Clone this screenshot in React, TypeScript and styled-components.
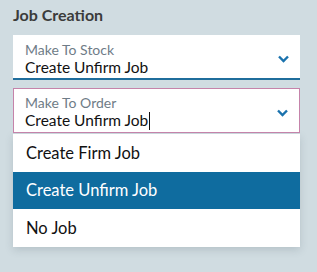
import * as React from "react";
import styled, { createGlobalStyle } from "styled-components";

const GlobalStyle = createGlobalStyle`
  html, body {
    margin: 0;
    padding: 0;
    background: #d0dce1;
    font-family: Lato, "Noto Sans", sans-serif;
  }
`;

const Page = styled.div`
  width: 317px;
  height: 272px;
  padding: 4px 17px 0 13px;
  box-sizing: border-box;
`;

const Title = styled.h2`
  margin: 0 0 9px;
  font-size: 16px;
  line-height: 22px;
  font-weight: 700;
  color: #3b3b3b;
`;

const Stack = styled.div`
  display: flex;
  flex-direction: column;
  gap: 8px;
`;

const Field = styled.div<{ $focused?: boolean }>`
  position: relative;
  height: 45px;
  box-sizing: border-box;
  background: #fff;
  border: ${(p) => (p.$focused ? "1px solid #c583aa" : "0")};
  border-bottom: ${(p) => (p.$focused ? "1px solid #c583aa" : "2px solid #1f6d9c")};
  padding: ${(p) => (p.$focused ? "5px 40px 0 11px" : "6px 40px 0 12px")};
`;

const Label = styled.div`
  font-size: 14px;
  line-height: 17px;
  color: #6f7c87;
`;

const Value = styled.div`
  font-size: 15.5px;
  line-height: 19px;
  color: #111;
  display: flex;
  align-items: center;
`;

const Caret = styled.span`
  display: inline-block;
  width: 1px;
  height: 18px;
  background: #111;
  margin-left: 1px;
`;

const Chevron = styled.svg`
  position: absolute;
  right: 11px;
  top: 20px;
`;

const Menu = styled.ul`
  list-style: none;
  margin: -7px 0 0;
  padding: 0;
  background: #fff;
  box-shadow: 0 3px 8px rgba(60, 80, 90, 0.18);
`;

const Option = styled.li<{ $active?: boolean }>`
  height: 37.5px;
  display: flex;
  align-items: center;
  padding-left: 13px;
  font-size: 16.5px;
  color: ${(p) => (p.$active ? "#fff" : "#111")};
  background: ${(p) => (p.$active ? "#0f6c9f" : "#fff")};
`;

const ChevronIcon = () => (
  <Chevron width="11" height="8" viewBox="0 0 11 8">
    <path d="M1 1.5 L5.5 6 L10 1.5" fill="none" stroke="#1a72ad" strokeWidth="2.4" />
  </Chevron>
);

export default function App() {
  return (
    <>
      <GlobalStyle />
      <Page>
        <Title>Job Creation</Title>
        <Stack>
          <Field>
            <Label>Make To Stock</Label>
            <Value>Create Unfirm Job</Value>
            <ChevronIcon />
          </Field>
          <Field $focused>
            <Label>Make To Order</Label>
            <Value>
              Create Unfirm Job
              <Caret />
            </Value>
            <ChevronIcon />
          </Field>
          <Menu>
            <Option>Create Firm Job</Option>
            <Option $active>Create Unfirm Job</Option>
            <Option>No Job</Option>
          </Menu>
        </Stack>
      </Page>
    </>
  );
}
